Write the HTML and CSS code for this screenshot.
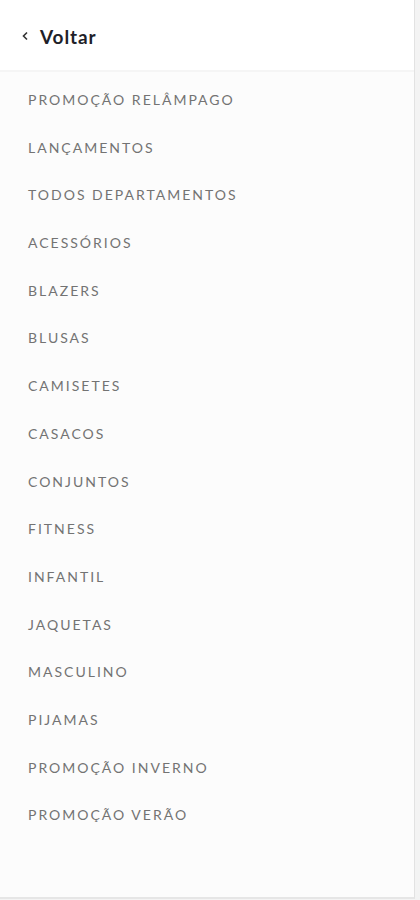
FILE: index.html
```html
<!DOCTYPE html>
<html lang="pt-BR">
<head>
<meta charset="utf-8">
<link rel="stylesheet" href="styles.css">
</head>
<body>
<div class="page">
  <aside class="drawer">
    <header class="drawer-head">
      <svg class="chev" width="8" height="10" viewBox="0 0 8 10"><path d="M6 1.5 L2.5 5 L6 8.5" fill="none" stroke="#333" stroke-width="1.6"/></svg>
      <span class="back">Voltar</span>
    </header>
    <ul class="menu">
      <li>PROMOÇÃO RELÂMPAGO</li>
      <li>LANÇAMENTOS</li>
      <li>TODOS DEPARTAMENTOS</li>
      <li>ACESSÓRIOS</li>
      <li>BLAZERS</li>
      <li>BLUSAS</li>
      <li>CAMISETES</li>
      <li>CASACOS</li>
      <li>CONJUNTOS</li>
      <li>FITNESS</li>
      <li>INFANTIL</li>
      <li>JAQUETAS</li>
      <li>MASCULINO</li>
      <li>PIJAMAS</li>
      <li>PROMOÇÃO INVERNO</li>
      <li>PROMOÇÃO VERÃO</li>
    </ul>
  </aside>
  <div class="edge"></div>
</div>
</body>
</html>
```
FILE: styles.css
```css
html, body { margin: 0; padding: 0; }
body { font-family: Lato, "Open Sans", sans-serif; background: #f4f4f4; }
.page { display: flex; height: 900px; }
.drawer {
  width: 415px;
  height: 899px;
  background: #fcfcfc;
  border-right: 1px solid #e2e2e2;
  border-bottom: 2px solid #e6e6e6;
  box-sizing: border-box;
}
.edge { flex: 1; background: #f3f3f3; }
.drawer-head {
  height: 72px;
  background: #fff;
  border-bottom: 2px solid #f5f5f5;
  display: flex;
  align-items: center;
  padding: 2px 0 0 21px;
  gap: 11px;
  box-sizing: border-box;
}
.chev { display: block; }
.back { font-size: 19px; font-weight: 700; color: #1f1f29; letter-spacing: 0.9px; }
.menu { list-style: none; margin: 0; padding: 19px 0 0 28px; }
.menu li {
  height: 47.7px;
  line-height: 18px;
  font-size: 14px;
  letter-spacing: 2px;
  color: #737373;
}
```
